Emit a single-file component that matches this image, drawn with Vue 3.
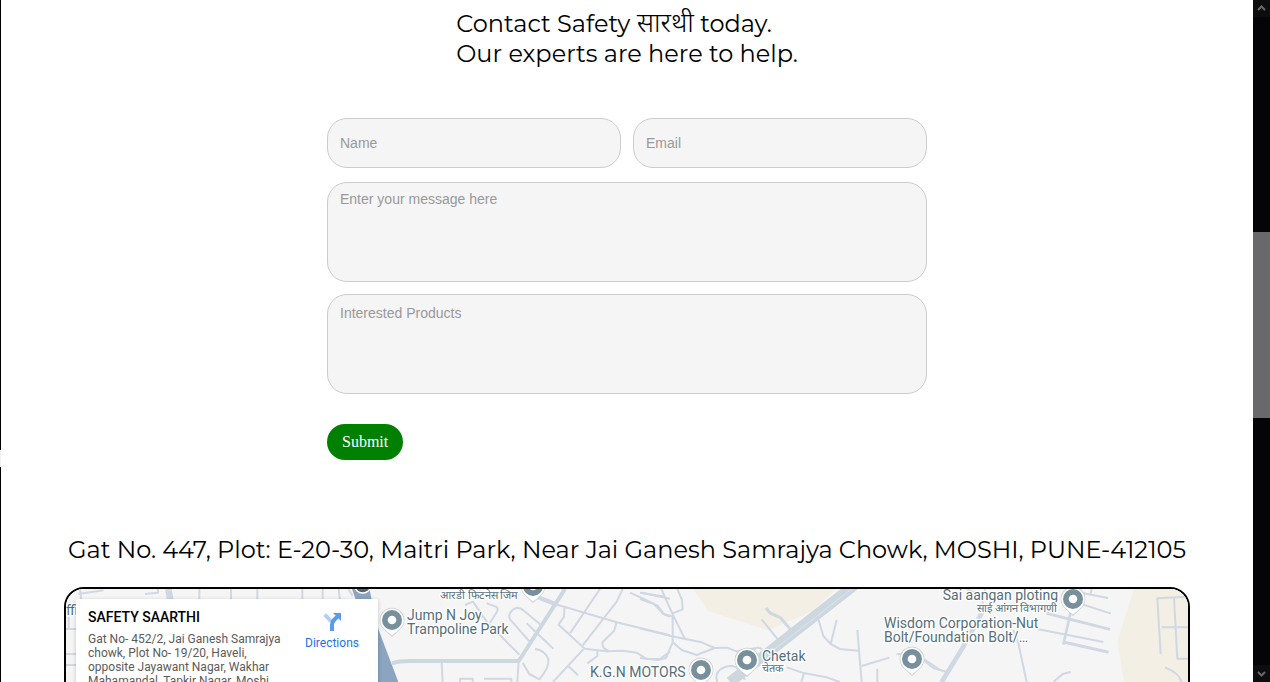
<script setup>
import { ref } from 'vue'

const name = ref('')
const email = ref('')
const message = ref('')
const products = ref('')

const pins = [
  { x: 1176, y: 120 },
  { x: 1599, y: 18 },
  { x: 2103, y: 270 },
  { x: 2241, y: 240 },
  { x: 2736, y: 237 },
  { x: 3219, y: 57 },
]
</script>

<template>
  <div class="window">
    <div class="edge"></div>
    <main class="page">
      <h1 class="intro">Contact Safety <span lang="hi">सारथी</span> today.<br />Our experts are here to help.</h1>

      <form class="contact" @submit.prevent>
        <div class="pair">
          <input v-model="name" type="text" placeholder="Name" aria-label="Name" />
          <input v-model="email" type="email" placeholder="Email" aria-label="Email" />
        </div>
        <textarea v-model="message" class="message" placeholder="Enter your message here" aria-label="Enter your message here"></textarea>
        <textarea v-model="products" class="products" placeholder="Interested Products" aria-label="Interested Products"></textarea>
        <button type="submit">Submit</button>
      </form>

      <h2 class="address">Gat No. 447, Plot: E-20-30, Maitri Park, Near Jai Ganesh Samrajya Chowk, MOSHI, PUNE-412105</h2>

      <section class="map" aria-label="Map">
        <svg class="tiles" viewBox="198 27 3366 1344" preserveAspectRatio="xMinYMin slice">
          <rect x="198" y="27" width="3366" height="1344" fill="#f5f5f5" />

          <!-- open land -->
          <path d="M2080 27L2124 93L2305 151L2440 92L2508 27Z" fill="#f3efe4" />
          <path d="M3402 27L3352 184L3372 306V1371H3564V27Z" fill="#f3efe4" />

          <!-- river -->
          <path d="M1056 27H1108L1136 150L1195 306V700H1134V250Z" fill="#8ba5c1" />

          <!-- west streets -->
          <g class="road">
            <path d="M235 42L310 31M435 42L474 38V27M598 27V60M693 27V60M772 27V60M907 27V60M968 27V60M1016 27L1020 60M1045 27L1058 48" />
            <path d="M198 147H230M198 222H230M198 255H230M206 110V145M240 27L244 60" />
            <path d="M505 27L511 60" stroke-width="20" />
          </g>

          <g class="road" transform="translate(1110 0)">
            <path d="M66 250Q88 243 120 243H446L454 231L585 27" class="main" />
            <path d="M500 50L562 74" stroke-width="13" />
            <path d="M562 74L740 127L900 166" />
            <path d="M215 247L218 306M446 243L442 306M270 306V296H308V306M342 296H424V306" />
            <path d="M448 224L350 125M285 75L309 65L350 125M350 70L378 80Q388 86 378 100L360 128" />
            <path d="M480 186L420 118Q412 104 430 88Q446 78 460 91L512 134M470 130L550 206" />
            <path d="M458 248L478 282L508 298Q540 260 535 238Q525 210 495 207" />
            <path d="M549 306L640 208M595 258L624 286M652 250L682 228V214" />
            <path d="M583 82L582 110L566 134L644 206L710 214L760 212L800 218L830 237H870L900 215" />
            <path d="M600 160L690 27M638 196L740 65L758 27M740 127L732 153L698 186Q694 204 715 212" />
            <path d="M780 38L850 70L880 102L900 110M815 38L900 56" />
          </g>

          <g class="road" transform="translate(1920 0)">
            <path d="M0 38L76 50M0 57L52 76L72 102L98 110M98 100L128 88L126 60L112 27M64 27L98 103L134 175M98 108V187" />
            <path d="M0 145L92 168L185 187L224 204L260 203L290 214L345 205M98 187L125 210L170 225L224 204M98 187L78 234L54 240L0 234" />
            <path d="M340 212Q350 196 366 208" />
            <path d="M365 118L415 180" />
            <path d="M453 150L420 112L390 99L378 84" stroke-width="9" />
            <path d="M535 118L550 168L572 192L600 207L655 212M572 192L590 120M652 150L665 306M665 258L748 233M712 266V306" />
            <path d="M440 262L494 280L560 292L600 306M492 280L484 306M232 306Q222 280 245 266Q265 252 290 262L315 300" />
            <path d="M650 10L388 215L270 306" class="highway" />
            <path d="M650 15L388 220" stroke="#dfe5e9" stroke-width="3" />
            <path d="M770 222L830 224L865 246L900 270" />
          </g>

          <g class="road" transform="translate(2700 0)">
            <path d="M250 90L187 205L125 306" stroke-width="14" />
            <path d="M200 27L270 60M340 150L355 190L380 306M70 240L100 264L140 276M460 306L488 282L512 276M255 27L240 110" />
            <path d="M440 100L630 148M490 186L626 217" stroke-width="9" />
            <path d="M415 148L610 186M535 69L633 101M530 36L624 54M575 27L571 45" />
            <path d="M512 96L490 194" stroke-width="8" />
            <path d="M864 50L772 55L782 222M822 55L832 236H864M785 142H864M795 262Q840 280 844 306" />
          </g>

          <!-- place pins -->
          <g v-for="pin in pins" :key="pin.x" :transform="`translate(${pin.x} ${pin.y})`">
            <path class="shadow" d="M0 51L-23 29A37 37 0 1 1 23 29Z" />
            <path d="M0 47L-23 27A35 35 0 1 1 23 27Z" fill="#fff" />
            <circle r="30" fill="#78909c" />
            <circle r="13" fill="#fff" />
          </g>
          <g transform="translate(1088 15)">
            <circle r="26" fill="#fff" />
            <circle r="22" fill="#536773" />
          </g>

          <!-- place names -->
          <g class="label">
            <text x="198" y="105">ffi</text>
            <text x="1221" y="121">Jump N Joy</text>
            <text x="1221" y="163">Trampoline Park</text>
            <text x="1770" y="291">K.G.N MOTORS</text>
            <text x="2286" y="243">Chetak</text>
            <text x="2652" y="145">Wisdom Corporation-Nut</text>
            <text x="2652" y="187">Bolt/Foundation Bolt/…</text>
            <text x="3174" y="61" text-anchor="end">Sai aangan ploting</text>
          </g>
          <g class="label local">
            <text x="1320" y="56">आरडी फिटनेस जिम</text>
            <text x="2286" y="277">चेतक</text>
            <text x="3172" y="95" text-anchor="end">साई आंगन विभागणी</text>
          </g>
        </svg>

        <article class="place">
          <div class="details">
            <h3>SAFETY SAARTHI</h3>
            <p>Gat No- 452/2, Jai Ganesh Samrajya chowk, Plot No- 19/20, Haveli, opposite Jayawant Nagar, Wakhar Mahamandal, Tapkir Nagar, Moshi</p>
          </div>
          <a class="directions" href="#">
            <svg viewBox="0 0 54 54" width="18" height="18" aria-hidden="true">
              <path d="M5 5L25 25" stroke="#b4d0f8" stroke-width="12" />
              <path d="M27 54V35Q27 27 33 21L44 10" fill="none" stroke="#5a9af0" stroke-width="12" />
              <path d="M30 0H54V24Z" fill="#5a9af0" />
            </svg>
            Directions
          </a>
        </article>
      </section>
    </main>

    <div class="scrollbar" aria-hidden="true">
      <svg class="arrow" viewBox="0 0 17 17"><path d="M5 10L8.500 6.500L12 10" /></svg>
      <div class="track"><div class="thumb"></div></div>
      <svg class="arrow" viewBox="0 0 17 17"><path d="M5 7L8.500 10.500L12 7" /></svg>
    </div>
  </div>
</template>

<style>
body {
  background: #fff;
  overflow: hidden;
}
</style>

<style scoped>
* {
  box-sizing: border-box;
}
.window {
  display: flex;
  height: 100vh;
  overflow: hidden;
}
.edge {
  flex: 0 0 1px;
  background: linear-gradient(#000 450px, #f0f0f0 450px, #f0f0f0 467px, #000 467px);
}
.page {
  flex: 1;
  min-width: 0;
  display: flex;
  flex-direction: column;
  align-items: center;
  padding-top: 9px;
  overflow: hidden;
}
h1,
h2,
h3,
p {
  margin: 0;
}
.intro,
.address {
  font: 400 24px/30px Montserrat, Inter, "Noto Sans", sans-serif;
  color: #000;
}
.intro span {
  font-size: 27px;
  font-weight: 300;
  line-height: 24px;
}
.contact {
  flex: none;
  width: 600px;
  max-width: 90%;
  margin-top: 49px;
  display: flex;
  flex-direction: column;
}
.pair {
  display: flex;
  gap: 12px;
  margin-bottom: 14px;
}
input,
textarea {
  display: block;
  width: 100%;
  min-width: 0;
  margin: 0;
  padding: 8px 12px;
  border: 1px solid #ccc;
  border-radius: 20px;
  background: #f5f5f5;
  color: #333;
  font: 14px/16px "Liberation Sans", Arial, sans-serif;
  resize: none;
  outline: none;
}
input {
  height: 50px;
}
textarea {
  height: 100px;
}
.products {
  margin-top: 12px;
  padding-top: 10px;
}
::placeholder {
  color: #999;
  opacity: 1;
}
button {
  align-self: flex-start;
  height: 36px;
  margin-top: 30px;
  padding: 0 15px;
  border: 0;
  border-radius: 18px;
  background: green;
  color: #fff;
  font: 16px/20px "Liberation Serif", "Times New Roman", serif;
}
.address {
  margin-top: 75px;
  text-align: center;
}
.map {
  position: relative;
  flex: none;
  align-self: stretch;
  height: 452px;
  margin: 22px 63px 0;
  border: 2px solid #000;
  border-radius: 20px;
  overflow: hidden;
}
.tiles {
  display: block;
  width: 100%;
  height: 100%;
}
.road {
  fill: none;
  stroke: #cfd8e3;
  stroke-width: 6px;
  stroke-linejoin: round;
}
.road .main {
  stroke: #ccd7df;
  stroke-width: 12px;
}
.road .highway {
  stroke: #ccd7df;
  stroke-width: 32px;
}
.shadow {
  fill: #c9cdd0;
}
.label {
  font: 42px Roboto, sans-serif;
  fill: #546e7a;
  stroke: #fff;
  stroke-width: 8px;
  stroke-linejoin: round;
  paint-order: stroke;
}
.local {
  font-size: 33px;
}
.place {
  position: absolute;
  top: 10px;
  left: 10px;
  display: flex;
  justify-content: space-between;
  width: 302px;
  height: 112px;
  padding: 9px 12px;
  border-radius: 2px;
  background: #fff;
  box-shadow: 0 1px 4px rgba(0, 0, 0, 0.2);
  font: 12px/14px Roboto, sans-serif;
  color: #5b5b5b;
}
.details {
  width: 200px;
}
h3 {
  margin-bottom: 6px;
  font: 500 14px/18px Roboto, sans-serif;
  color: #000;
}
.directions {
  display: flex;
  flex-direction: column;
  align-items: center;
  gap: 5px;
  width: 68px;
  padding-top: 5px;
  color: #1a73e8;
  text-decoration: none;
}
.scrollbar {
  flex: 0 0 17px;
  display: flex;
  flex-direction: column;
  background: #050507;
}
.arrow {
  display: block;
  flex: none;
  width: 17px;
  height: 17px;
  background: #0d0d0f;
}
.arrow path {
  fill: none;
  stroke: #686868;
  stroke-width: 2px;
}
.track {
  flex: 1;
  padding-top: 215px;
}
.thumb {
  height: 186px;
  background: #69696b;
}
</style>
